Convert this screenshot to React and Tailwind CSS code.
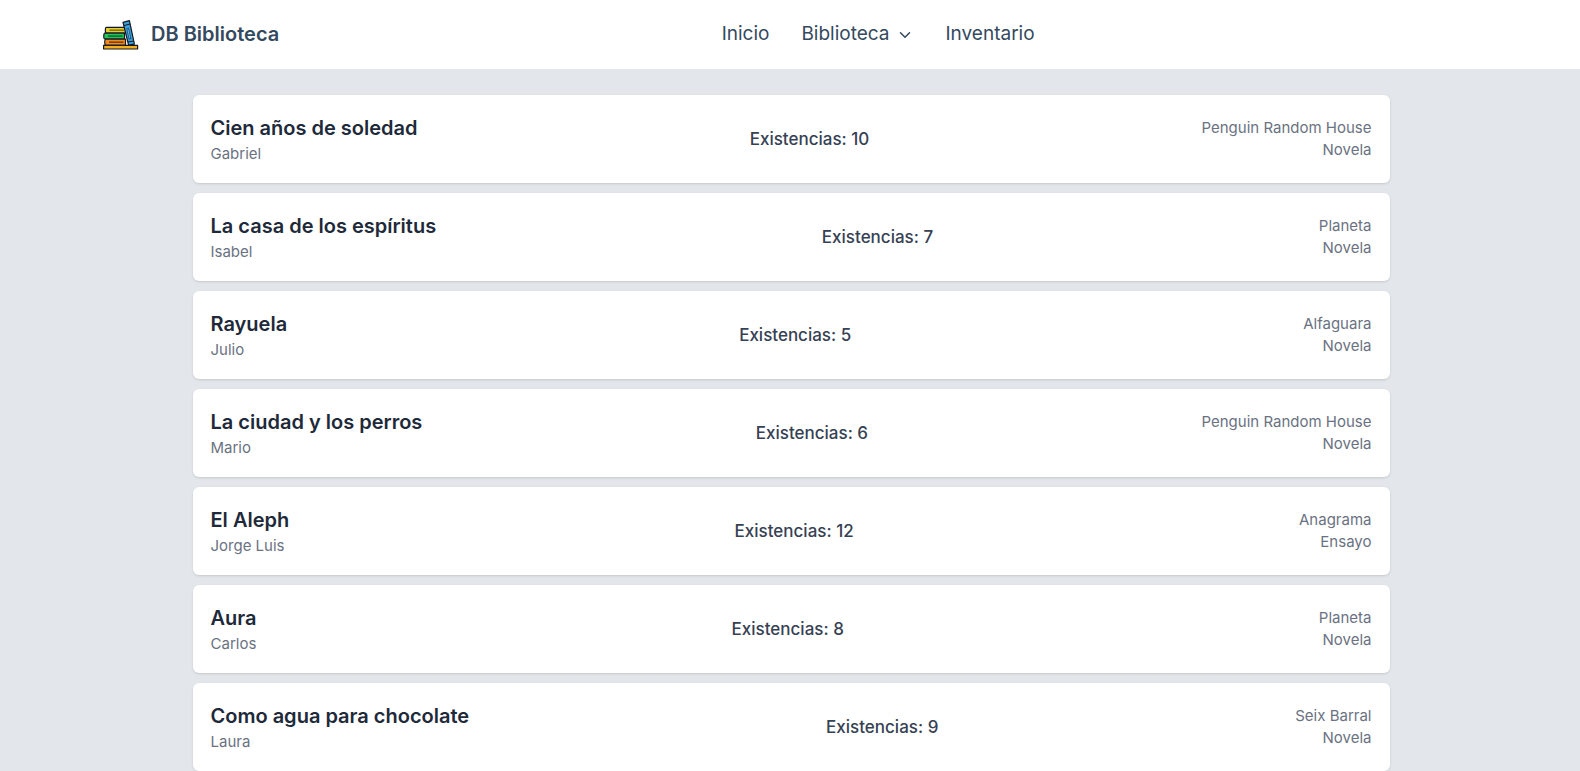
import React from "react";
import { ChevronDown } from "lucide-react";

const books = [
  { title: "Cien años de soledad", author: "Gabriel", stock: 10, publisher: "Penguin Random House", genre: "Novela" },
  { title: "La casa de los espíritus", author: "Isabel", stock: 7, publisher: "Planeta", genre: "Novela" },
  { title: "Rayuela", author: "Julio", stock: 5, publisher: "Alfaguara", genre: "Novela" },
  { title: "La ciudad y los perros", author: "Mario", stock: 6, publisher: "Penguin Random House", genre: "Novela" },
  { title: "El Aleph", author: "Jorge Luis", stock: 12, publisher: "Anagrama", genre: "Ensayo" },
  { title: "Aura", author: "Carlos", stock: 8, publisher: "Planeta", genre: "Novela" },
  { title: "Como agua para chocolate", author: "Laura", stock: 9, publisher: "Seix Barral", genre: "Novela" },
];

function BooksLogo() {
  return (
    <svg className="h-9 w-9" viewBox="0 0 36 36" aria-hidden="true">
      <g stroke="#15191f" strokeWidth="1.2" strokeLinejoin="round">
        <rect x="0.6" y="28.4" width="34" height="3.6" fill="#f2b01e" />
        <path d="M22.5 10.4H3.4C2 10.4 2 16 3.4 16h19.1z" fill="#e3cf35" />
        <path d="M21.5 16.2H1.8C.4 16.2.4 22 1.8 22h19.7z" fill="#27c25a" />
        <path d="M22.5 22.2H2.8C1.4 22.2 1.4 28.2 2.8 28.2h19.7z" fill="#f18a1f" />
        <path d="M20 5.4l6.4-1.8 5 23.6-5.8 1z" fill="#3a9fdc" />
      </g>
      <g fill="none">
        <path d="M6.5 13.2h14.5" stroke="#85761a" strokeWidth="1.6" />
        <path d="M5 19.1h14.5" stroke="#126f35" strokeWidth="1.6" />
        <path d="M6 25.2h14.5" stroke="#7d430d" strokeWidth="1.6" />
        <path d="M21 8.6l6-1.6M25 25l5.9-1" stroke="#15191f" strokeWidth="1" />
        <path d="M24.6 11.2l2.5 11" stroke="#174f78" strokeWidth="2.6" />
        <path d="M24.8 12.2l2.1 9" stroke="#79c8f2" strokeWidth="0.9" />
      </g>
    </svg>
  );
}

function Header() {
  return (
    <header className="bg-white text-[#34495e]">
      <div className="mx-auto flex h-[69px] max-w-[1374px] items-center justify-between">
        <a href="#" className="flex items-center gap-3 text-xl font-semibold">
          <BooksLogo />
          <span className="pb-0.5">DB Biblioteca</span>
        </a>
        <nav className="flex items-center gap-8 pb-0.5 text-[19px] leading-7">
          <a href="#inicio">Inicio</a>
          <button type="button" className="flex items-center gap-1.5">
            Biblioteca
            <ChevronDown className="mt-0.5 h-[18px] w-[18px]" aria-hidden="true" />
          </button>
          <a href="#inventario">Inventario</a>
        </nav>
        <div />
      </div>
    </header>
  );
}

function BookCard({ book }) {
  return (
    <li className="flex items-center justify-between rounded-md bg-white p-[18px] shadow-sm">
      <div>
        <h2 className="text-xl leading-[30px] font-semibold text-gray-800">{book.title}</h2>
        <p className="text-[15px] leading-[22px] text-gray-500">{book.author}</p>
      </div>
      <p className="text-[17px] leading-[26px] font-medium text-gray-700">Existencias: {book.stock}</p>
      <div className="text-right text-[15px] leading-[22px] text-gray-500">
        <p>{book.publisher}</p>
        <p>{book.genre}</p>
      </div>
    </li>
  );
}

export default function App() {
  return (
    <div className="h-screen overflow-hidden bg-[#e3e6ea] font-['Inter',sans-serif]">
      <Header />
      <main className="pt-[26px] pr-8 pl-[34px]">
        <ul className="mx-auto flex max-w-[1197px] flex-col gap-[10px]">
          {books.map((book) => (
            <BookCard key={book.title} book={book} />
          ))}
        </ul>
      </main>
    </div>
  );
}
